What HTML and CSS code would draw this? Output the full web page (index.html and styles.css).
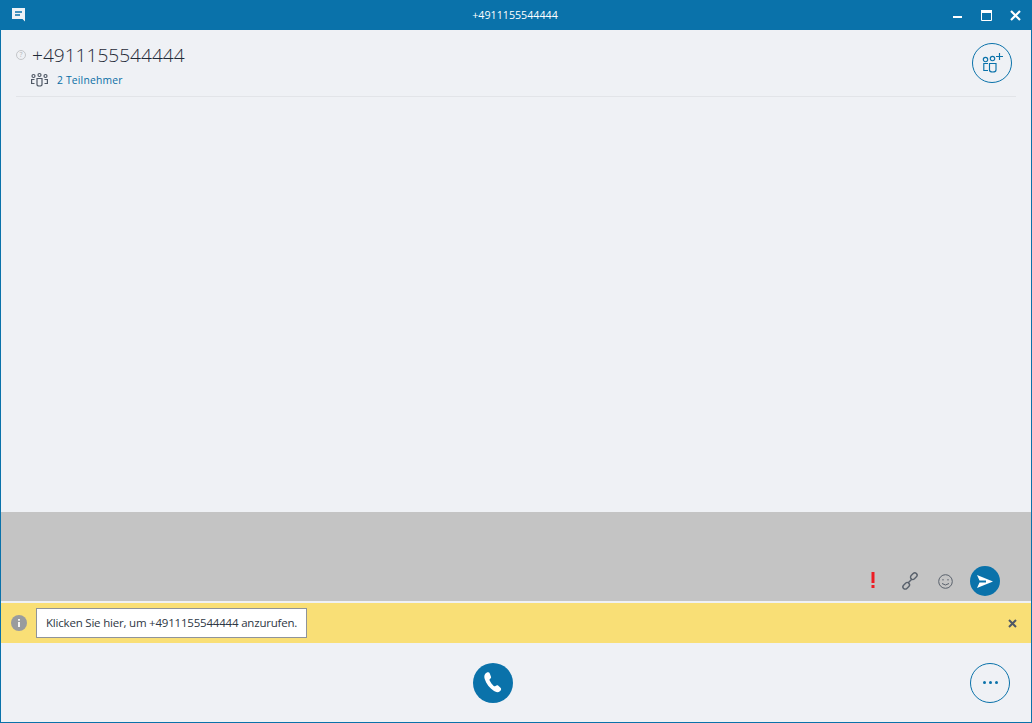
FILE: index.html
```html
<!DOCTYPE html>
<html lang="de">
<head>
<meta charset="utf-8">
<title>+4911155544444</title>
<link rel="stylesheet" href="styles.css">
</head>
<body>
<div class="window">
  <header class="titlebar">
    <svg class="app-icon" width="14" height="14" viewBox="0 0 14 14"><path d="M0 0H13V13.500L10.500 11H0Z" fill="#eef2f6"/><path d="M3 4H10M3 7H8" stroke="#0a72aa" stroke-width="1.300" fill="none"/></svg>
    <div class="title">+4911155544444</div>
    <div class="win-controls">
      <svg width="10" height="10" viewBox="0 0 10 10" class="ctl-min"><rect x="0" y="6" width="9" height="2" fill="#fff"/></svg>
      <svg width="11" height="11" viewBox="0 0 11 11" class="ctl-max"><path d="M.5 .5H10.500V10.500H.5Z" fill="none" stroke="#fff"/><rect x="0" y="0" width="11" height="3" fill="#fff"/></svg>
      <svg width="11" height="11" viewBox="0 0 11 11" class="ctl-close"><path d="M1 1L10 10M10 1L1 10" stroke="#fff" stroke-width="2.200"/></svg>
    </div>
  </header>

  <section class="conv-head">
    <div class="conv-info">
      <div class="name-row">
        <svg class="presence" width="10" height="10" viewBox="0 0 10 10"><circle cx="5" cy="5" r="4.500" fill="none" stroke="#c4c6c9"/><text x="5" y="7.400" text-anchor="middle" class="presence-q">?</text></svg>
        <span class="name">+4911155544444</span>
      </div>
      <div class="part-row">
        <svg width="17" height="14" viewBox="0 0 17 14" fill="none" stroke="#4f5865" stroke-width="1.200"><circle cx="2.500" cy="3" r="1.500"/><circle cx="8.500" cy="2" r="1.500"/><circle cx="14.500" cy="3" r="1.500"/><path d="M3.500 6.500H.6V10.500H3.500M13.500 6.500H16.400V10.500H13.500M6 5.500H11V11.500Q11 13 8.500 13T6 11.500Z"/></svg>
        <span class="participants">2 Teilnehmer</span>
      </div>
    </div>
    <button class="ring-btn add-btn" aria-label="Teilnehmer hinzufügen">
      <svg width="21" height="19" viewBox="0 0 21 19" fill="none" stroke="#0a72aa" stroke-width="1.150"><circle cx="3.500" cy="5.500" r="2.200"/><circle cx="10.500" cy="4.500" r="2.200"/><path d="M6 9.500H1.800V16.500H6M7.500 9.500H14V16Q14 18 10.750 18T7.500 16ZM14 2.500H21M17.500 -1V6"/></svg>
    </button>
  </section>

  <main class="messages"></main>

  <section class="compose">
    <div class="compose-tools">
      <svg class="priority" width="4" height="16" viewBox="0 0 4 16"><path d="M.5 0H3.500V11H.5ZM.5 13H3.500V16H.5Z" fill="#ed1c24"/></svg>
      <svg class="link" width="16" height="16" viewBox="0 0 16 16" fill="none" stroke="#59616c" stroke-width="1.400"><rect x="8.100" y=".9" width="7.400" height="4.600" rx="2.300" transform="rotate(-45 11.800 3.200)"/><rect x=".5" y="10.500" width="7.400" height="4.600" rx="2.300" transform="rotate(-45 4.200 12.800)"/><path d="M6 10L10 6"/></svg>
      <svg class="smile" width="15" height="15" viewBox="0 0 15 15" fill="none" stroke="#59616c"><circle cx="7.500" cy="7.500" r="6.800"/><path d="M4 9.500Q7.500 12.500 11 9.500"/><path d="M5 5V6.500M10 5V6.500"/></svg>
      <button class="send-btn" aria-label="Senden">
        <svg width="16" height="13" viewBox="0 0 16 13"><path d="M0 0L16 6.500L0 13L2.500 7.500H9V5.500H2.500Z" fill="#fff"/></svg>
      </button>
    </div>
  </section>

  <section class="notice">
    <svg class="info" width="16" height="16" viewBox="0 0 16 16"><circle cx="8" cy="8" r="8" fill="#999b9e"/><path d="M7 4H9V5.800H7ZM7 7H9V12H7Z" fill="#f4f4f2"/></svg>
    <div class="notice-box">Klicken Sie hier, um +4911155544444 anzurufen.</div>
    <svg class="notice-close" width="9" height="9" viewBox="0 0 9 9"><path d="M1 1L8 8M8 1L1 8" stroke="#4f5865" stroke-width="2"/></svg>
  </section>

  <footer class="actions">
    <div class="call-slot">
      <button class="call-btn" aria-label="Anrufen">
        <svg width="18" height="21" viewBox="0 0 18 21"><path d="M2.500 .8C4 0 5.300 .3 5.800 1.400L7 4.700C7.300 5.700 6.800 6.300 5.900 7C5.300 7.500 5.400 8 5.800 8.800C6.700 10.800 8 12.500 9.700 13.900C10.300 14.400 10.800 14.400 11.500 14C12.400 13.300 13.300 13 14.100 13.600L16.500 15.700C17.500 16.700 17.300 17.900 16.200 18.900C14.500 20.500 12.400 20.600 10 19C5.500 16 2.300 11.800 .7 7C-.2 4.300 .5 2 2.500 .8Z" fill="#fff"/></svg>
      </button>
    </div>
    <button class="ring-btn more-btn" aria-label="Mehr">
      <span class="dot"></span><span class="dot"></span><span class="dot"></span>
    </button>
  </footer>
</div>
</body>
</html>
```

FILE: styles.css
```css
* { box-sizing: border-box; }
html, body { margin: 0; padding: 0; }
body { font-family: "Open Sans", "Noto Sans", sans-serif; background: #eff1f5; overflow: hidden; }
button { padding: 0; font: inherit; cursor: pointer; }
svg { display: block; flex: none; overflow: visible; }

.window {
  width: 1032px;
  height: 723px;
  display: flex;
  flex-direction: column;
  border: 1px solid #0a72aa;
  border-top: 0;
  background: #eff1f5;
}

.titlebar {
  height: 30px;
  flex: none;
  margin: 0 -1px;
  background: #0a72aa;
  display: grid;
  grid-template-columns: 1fr auto 1fr;
  align-items: center;
  padding: 0 11px 0 12px;
}
.title {
  text-align: center;
  color: #fff;
  font-size: 10.700px;
  margin-right: 3px;
}
.win-controls { display: flex; align-items: center; justify-content: flex-end; gap: 18px; }

.conv-head {
  height: 67px;
  flex: none;
  margin: 0 15px;
  border-bottom: 1px solid #e2e4e8;
  display: flex;
  justify-content: space-between;
  align-items: flex-start;
}
.conv-info { padding-top: 12px; }
.name-row { display: flex; align-items: center; gap: 6px; height: 26px; }
.presence-q { font-size: 7px; fill: #b5b7ba; font-family: "Open Sans", sans-serif; }
.name { font-size: 19.100px; font-weight: 300; color: #1f2a38; }
.part-row { display: flex; align-items: center; gap: 9px; padding-left: 15px; margin-top: 5px; height: 14px; }
.participants { font-size: 10.300px; color: #0a6ea5; letter-spacing: .2px; }

.ring-btn {
  width: 40px;
  height: 40px;
  border-radius: 50%;
  border: 1px solid #0a72aa;
  background: transparent;
  display: flex;
  align-items: center;
  justify-content: center;
}
.add-btn { margin-top: 13px; margin-right: 4px; }

.messages { flex: 1; }

.compose {
  height: 89px;
  flex: none;
  background: #c4c4c4;
  display: flex;
  align-items: flex-end;
  justify-content: flex-end;
}
.compose-tools { display: flex; align-items: center; padding: 0 31px 5px 0; }
.priority { margin-right: 27px; margin-top: -2px; }
.smile { margin-left: 20px; }
.send-btn {
  width: 30px;
  height: 30px;
  margin-left: 17px;
  border: 0;
  border-radius: 50%;
  background: #0a72aa;
  display: flex;
  align-items: center;
  justify-content: center;
}

.notice {
  height: 42px;
  flex: none;
  border-top: 2px solid #eff1f5;
  background: #f9df76;
  display: flex;
  align-items: center;
  padding: 0 14px 0 10px;
}
.notice-box {
  margin-left: 9px;
  height: 30px;
  width: 271px;
  background: #fff;
  border: 1px solid #8f949a;
  color: #2e3744;
  font-size: 11.500px;
  letter-spacing: -.2px;
  line-height: 28px;
  padding-left: 9px;
  white-space: nowrap;
}
.notice-close { margin-left: auto; }

.actions {
  height: 79px;
  flex: none;
  display: flex;
  align-items: center;
  padding: 0 21px 0 0;
}
.call-slot { width: 512px; display: flex; justify-content: flex-end; }
.call-btn {
  width: 40px;
  height: 40px;
  border: 0;
  border-radius: 50%;
  background: #0a72aa;
  display: flex;
  align-items: center;
  justify-content: center;
}
.more-btn { margin-left: auto; gap: 3px; }
.dot { width: 3px; height: 3px; border-radius: 50%; background: #0a72aa; }
```
